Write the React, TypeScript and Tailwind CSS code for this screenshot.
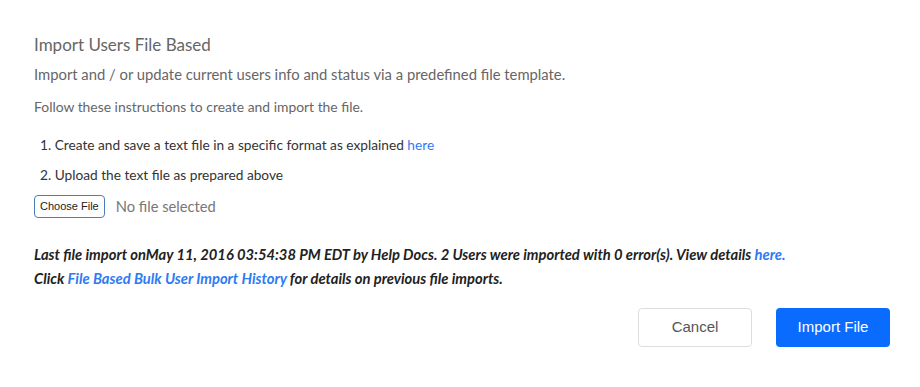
export default function App() {
  return (
    <div className="w-[920px] h-[387px] bg-white font-['Lato',sans-serif] relative">
      <div className="pl-[34px] pr-[30px] pt-[34px]">
        <h2 className="text-[17px] leading-[22px] text-[#666]">Import Users File Based</h2>
        <p className="text-[14.8px] leading-[20px] text-[#666] mt-[8px]">
          Import and / or update current users info and status via a predefined file template.
        </p>
        <p className="text-[13.9px] leading-[18px] text-[#666] mt-[14px]">
          Follow these instructions to create and import the file.
        </p>
        <ol className="mt-[20px] pl-[6px] text-[13.7px] leading-[18px] text-[#333]">
          <li>
            1. Create and save a text file in a specific format as explained{' '}
            <a className="text-[#2d7bf4]">here</a>
          </li>
          <li className="mt-[12px]">2. Upload the text file as prepared above</li>
        </ol>
        <div className="flex items-center mt-[11px]">
          <button className="h-[23px] px-[5px] border border-[#4a7fb5] rounded-[4px] bg-white text-[11px] text-[#222] font-['Liberation_Sans',sans-serif]">
            Choose File
          </button>
          <span className="ml-[11px] text-[14.7px] text-[#777]">No file selected</span>
        </div>
        <div className="mt-[24px] text-[14.75px] leading-[24px] italic font-bold text-[#222]">
          <p>
            Last file import onMay 11, 2016 03:54:38 PM EDT by Help Docs. 2 Users were imported with 0 error(s). View details{' '}
            <a className="text-[#2d7bf4]">here.</a>
          </p>
          <p>
            Click <a className="text-[#2d7bf4]">File Based Bulk User Import History</a> for details on previous file imports.
          </p>
        </div>
        <div className="flex justify-end gap-[24px] mt-[18px]">
          <button className="w-[114px] h-[39px] rounded-[4px] border border-[#ddd] bg-white text-[15px] text-[#555] font-['Liberation_Sans',sans-serif]">
            Cancel
          </button>
          <button className="w-[114px] h-[39px] rounded-[4px] bg-[#0a6cff] text-[15px] text-white font-['Liberation_Sans',sans-serif]">
            Import File
          </button>
        </div>
      </div>
    </div>
  );
}
